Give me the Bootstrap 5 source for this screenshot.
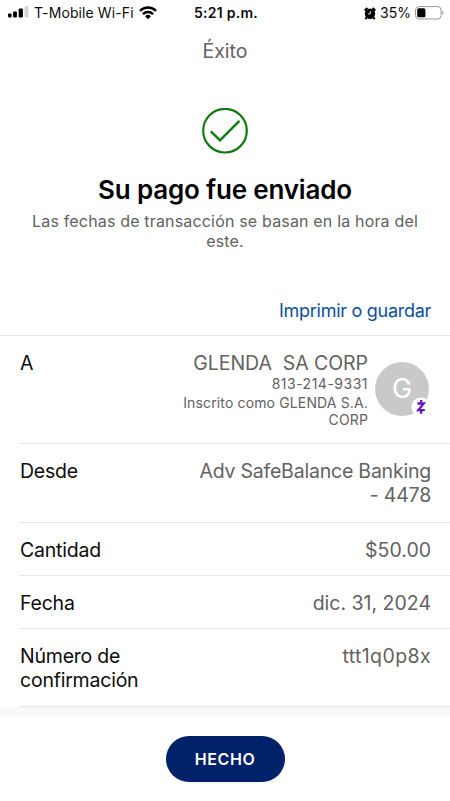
<!DOCTYPE html>
<html lang="es">
<head>
  <meta charset="UTF-8">
  <meta name="viewport" content="width=device-width, initial-scale=1.0">
  <title>Éxito</title>
  <link href="https://cdn.jsdelivr.net/npm/bootstrap@5.3.0/dist/css/bootstrap.min.css" rel="stylesheet">
  <style>
    body {
      font-family: Inter, "Liberation Sans", sans-serif;
      font-size: 19.5px;
      line-height: 24px;
      color: #0c0c0c;
      height: 801px;
      overflow: hidden;
    }
    svg { display: block; flex: none; }
    .gris { color: #626262; }
    .barra-estado {
      height: 26px;
      padding: 0 6px 0 8px;
      font-size: 14px;
      line-height: 26px;
    }
    .operador { letter-spacing: .1px; margin: 0 5px 0 5px; }
    .hora { font-weight: 600; letter-spacing: .25px; }
    .titulo { padding-top: 13px; height: 82px; }
    .encabezado {
      font-size: 26px;
      line-height: 32px;
      font-weight: 600;
      letter-spacing: -.18px;
      color: #000;
      margin: 20px 0 5px;
    }
    .nota {
      font-size: 16px;
      line-height: 20px;
      letter-spacing: .17px;
      height: 88px;
      padding: 0 30px;
    }
    .enlace {
      color: #0c4ea2;
      font-size: 18px;
      letter-spacing: -.28px;
      padding-right: 19px;
      height: 37px;
      border-bottom: 1px solid #e4e4e4;
    }
    .filas { padding-left: 19px; }
    .fila {
      border-bottom: 1px solid #e6e6e6;
      padding: 15px 19px 14px 1px;
    }
    .fila-larga { height: 79px; }
    .fila-larga.ultima { height: 78px; }
    .fila-corta { height: 53px; }
    .fila-a { height: 108px; }
    .etiqueta { letter-spacing: -.22px; }
    .nombre { letter-spacing: -.05px; }
    .telefono { font-size: 14px; line-height: 18px; letter-spacing: .5px; }
    .inscrito { font-size: 14px; line-height: 17px; letter-spacing: .14px; padding-top: 1px; }
    .cuenta { letter-spacing: -.21px; }
    .codigo { letter-spacing: .4px; }
    .avatar {
      width: 54px;
      height: 54px;
      margin: 11px 2px 0 7px;
      background: #c9c9c9;
      color: #fff;
      font-size: 27px;
    }
    .zelle { right: -2px; bottom: -1px; }
    .franja { height: 10px; background: #f9f9f9; }
    .boton {
      width: 119px;
      height: 46px;
      margin-top: 19px;
      background: #012169;
      color: #fff;
      font-size: 16px;
      font-weight: 600;
      letter-spacing: .6px;
    }
    .boton:hover { background: #001a55; color: #fff; }
  </style>
</head>
<body>
  <!-- Barra de estado -->
  <div class="barra-estado row g-0">
    <div class="col d-flex align-items-center">
      <svg width="21" height="14" viewBox="0 0 21 14">
        <rect x="0" y="7.4" width="3.6" height="4.2" rx="1"/>
        <rect x="5.1" y="5.6" width="3.8" height="6" rx="1"/>
        <rect x="10.7" y="2.6" width="4.2" height="9" rx="1"/>
        <rect x="16.6" y="0" width="3.8" height="11.6" rx="1" fill="#d3d3d3"/>
      </svg>
      <span class="operador text-nowrap">T-Mobile Wi-Fi</span>
      <svg width="18" height="15" viewBox="0 0 18 15">
        <g fill="none" stroke="#000" stroke-width="2.5">
          <path d="M1 4.9a11.4 11.4 0 0 1 16 0"/>
          <path d="M3.9 8.2a7.3 7.3 0 0 1 10.2 0"/>
        </g>
        <path d="M6.1 10.3a4.1 4.1 0 0 1 5.8 0L9 13.3z"/>
      </svg>
    </div>
    <div class="col-auto hora">5:21 p.m.</div>
    <div class="col d-flex align-items-center justify-content-end">
      <svg width="12" height="13" viewBox="0 0 12 13">
        <circle cx="6" cy="6.7" r="5.2"/>
        <path d="M.6 3.5 3.4.9M11.4 3.5 8.6.9M2.5 10.5l-1.2 1.7M9.5 10.5l1.2 1.7" stroke="#000" stroke-width="2"/>
        <path d="M6.3 4v2.9H3.9" fill="none" stroke="#fff" stroke-width=".9"/>
      </svg>
      <span class="ms-1 me-1">35%</span>
      <svg width="29" height="14" viewBox="0 0 29 14">
        <rect x=".5" y=".6" width="25.6" height="12.4" rx="3.5" fill="#fff" stroke="#999" stroke-width="1"/>
        <rect x="2.2" y="2.3" width="8.2" height="9" rx="1.6"/>
        <path d="M27.3 4.8c1.7.8 1.7 3.2 0 4z" fill="#999"/>
      </svg>
    </div>
  </div>

  <div class="titulo gris text-center">Éxito</div>

  <!-- Confirmación -->
  <svg class="mx-auto" width="46" height="46" viewBox="0 0 46 46" fill="none" stroke="#107a10">
    <circle cx="23" cy="22.7" r="21.8" stroke-width="2.2"/>
    <path d="M8.8 23.4l9.2 8.9L37.4 12.9" stroke-width="2.4"/>
  </svg>
  <h1 class="encabezado text-center"><span>Su pago fue enviado</span></h1>
  <div class="nota gris text-center"><span>Las fechas de transacción se basan en la hora del este.</span></div>
  <div class="enlace text-end"><span>Imprimir o guardar</span></div>

  <!-- Datos del pago -->
  <div class="filas">
    <div class="fila fila-a d-flex">
      <div class="etiqueta">A</div>
      <div class="ms-auto gris text-end">
        <div class="nombre">GLENDA&nbsp; SA CORP</div>
        <div class="telefono">813-214-9331</div>
        <div class="inscrito">Inscrito como GLENDA S.A.<br>CORP</div>
      </div>
      <div class="avatar rounded-circle position-relative d-flex align-items-center justify-content-center">
        G
        <svg class="zelle position-absolute" width="20" height="20" viewBox="0 0 20 20">
          <circle cx="10" cy="10" r="9.6" fill="#fff"/>
          <path d="M6.4 6.5h6.3L7.3 13.2h6.5M10.1 3v3.5M10.1 13.2v3.6" fill="none" stroke="#6316c4" stroke-width="2.3"/>
        </svg>
      </div>
    </div>
    <div class="fila fila-larga d-flex justify-content-between">
      <div class="etiqueta">Desde</div>
      <div class="gris text-end cuenta">Adv SafeBalance Banking<br>- 4478</div>
    </div>
    <div class="fila fila-corta d-flex justify-content-between">
      <div class="etiqueta">Cantidad</div>
      <div class="gris">$50.00</div>
    </div>
    <div class="fila fila-corta d-flex justify-content-between">
      <div class="etiqueta">Fecha</div>
      <div class="gris">dic. 31, 2024</div>
    </div>
    <div class="fila fila-larga ultima d-flex justify-content-between">
      <div class="etiqueta">Número de<br>confirmación</div>
      <div class="gris codigo">ttt1q0p8x</div>
    </div>
  </div>

  <div class="franja"></div>
  <div class="text-center">
    <button type="button" class="btn boton rounded-pill border-0 p-0">HECHO</button>
  </div>

  <script src="https://cdn.jsdelivr.net/npm/bootstrap@5.3.0/dist/js/bootstrap.bundle.min.js"></script>
</body>
</html>
